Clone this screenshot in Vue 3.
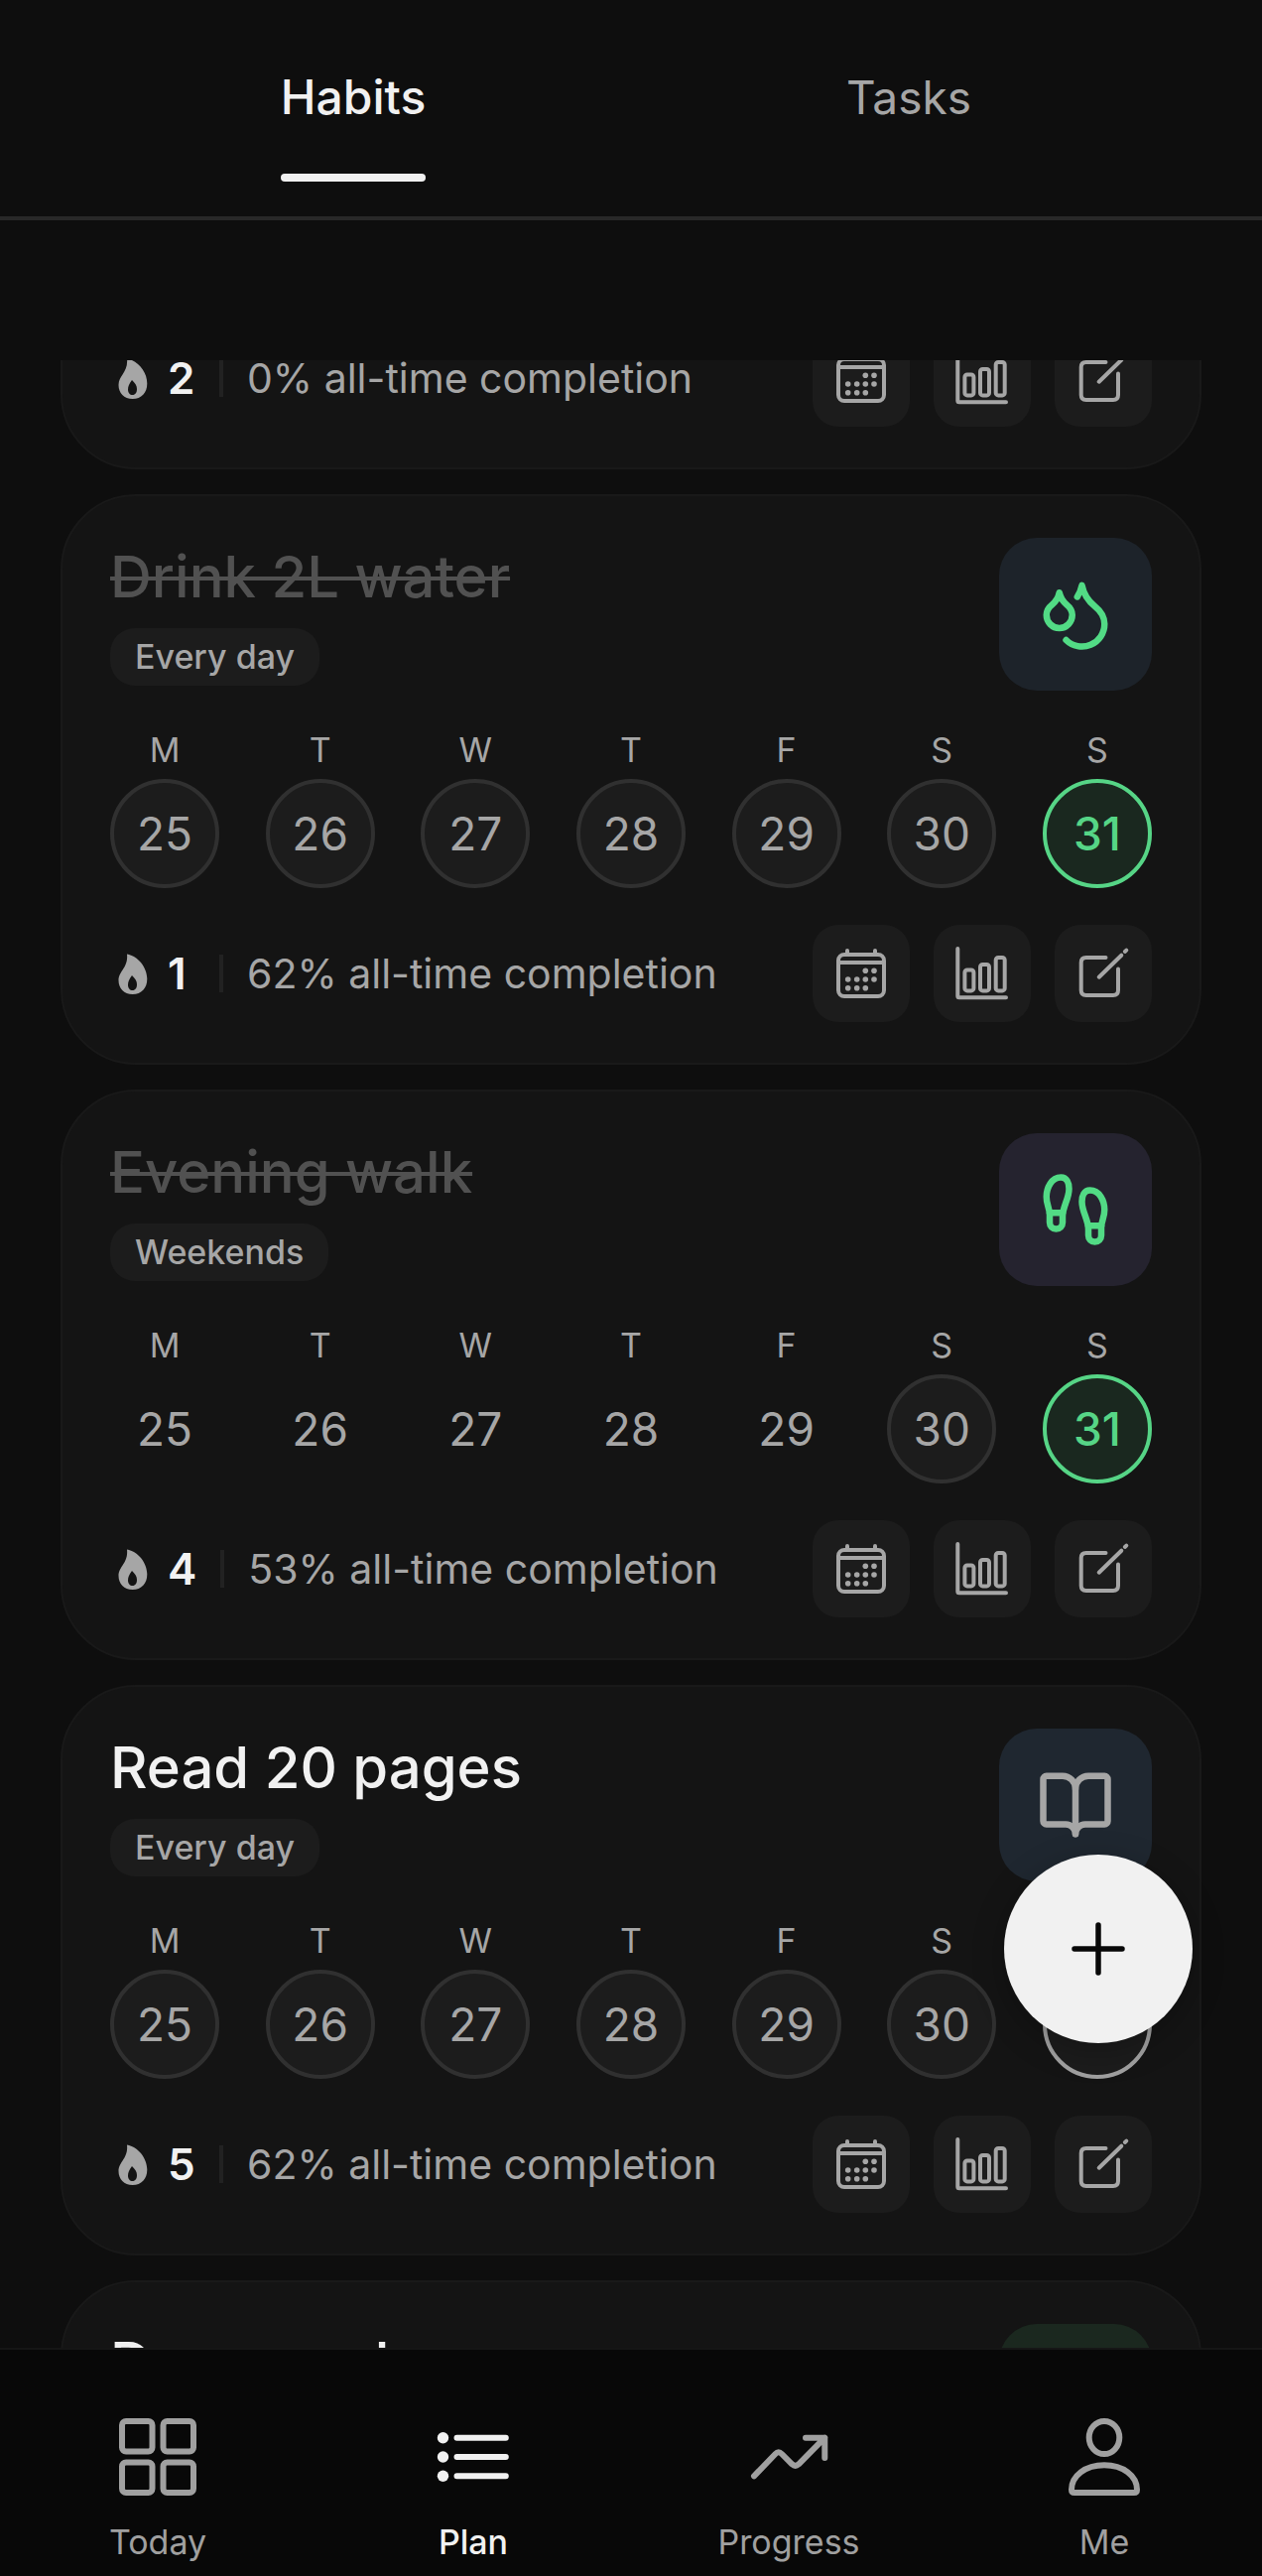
<script setup>
import { onMounted, ref } from 'vue'

const letters = ['M', 'T', 'W', 'T', 'F', 'S', 'S']
const days = letters.map((letter, i) => ({ letter, date: 25 + i, weekend: i > 4 }))

const habits = [
  { id: 0, streak: 2, rate: 0 },
  { id: 1, title: 'Drink 2L water', schedule: 'Every day', tone: 'blue', icon: 'drops', done: true, streak: 1, rate: 62 },
  { id: 2, title: 'Evening walk', schedule: 'Weekends', tone: 'violet', icon: 'steps', done: true, streak: 4, rate: 53 },
  { id: 3, title: 'Read 20 pages', schedule: 'Every day', tone: 'navy', icon: 'book', done: false, streak: 5, rate: 62 },
  { id: 4, title: 'Deep work', tone: 'green', done: false },
]

const icons = {
  drops: [
    'M7 16.3c2.2 0 4-1.83 4-4.05 0-1.16-.57-2.26-1.71-3.19S7.29 6.75 7 5.3c-.29 1.45-1.14 2.84-2.29 3.76S3 11.1 3 12.25c0 2.22 1.8 4.05 4 4.05z',
    'M12.56 6.6A10.97 10.97 0 0 0 14 3.02c.5 2.5 2 4.9 4 6.5s3 3.5 3 5.5a6.98 6.98 0 0 1-11.91 4.97',
  ],
  steps: [
    'M4 16v-2.38C4 11.5 2.97 10.5 3 8c.03-2.72 1.49-6 4.5-6C9.37 2 10 3.8 10 5.5c0 3.11-2 5.66-2 8.68V16a2 2 0 1 1-4 0Z',
    'M20 20v-2.38c0-2.12 1.03-3.12 1-5.62-.03-2.72-1.49-6-4.5-6C14.63 6 14 7.8 14 9.5c0 3.11 2 5.66 2 8.68V20a2 2 0 1 0 4 0Z',
    'M16 17h4',
    'M4 13h4',
  ],
  book: [
    'M12 7v14',
    'M3 18a1 1 0 0 1-1-1V4a1 1 0 0 1 1-1h5a4 4 0 0 1 4 4 4 4 0 0 1 4-4h5a1 1 0 0 1 1 1v13a1 1 0 0 1-1 1h-6a3 3 0 0 0-3 3 3 3 0 0 0-3-3z',
  ],
}

function dayClass(habit, day) {
  return {
    scheduled: habit.schedule !== 'Weekends' || day.weekend,
    today: day.date === 31,
    complete: day.date === 31 && habit.done,
  }
}

// Open the list at the second habit, with the end of the first still in view.
const scroller = ref(null)
onMounted(() => {
  scroller.value.scrollTop = 112
})
</script>

<template>
  <div class="app">
    <header class="tabs" role="tablist">
      <button class="tab active" role="tab" aria-selected="true"><span>Habits</span></button>
      <button class="tab" role="tab" aria-selected="false"><span>Tasks</span></button>
    </header>

    <main class="content">
      <div ref="scroller" class="list">
        <article v-for="habit in habits" :key="habit.id" class="card">
          <div v-if="habit.title" class="card-head">
            <div class="heading">
              <h2 :class="{ done: habit.done }">{{ habit.title }}</h2>
              <span v-if="habit.schedule" class="chip">{{ habit.schedule }}</span>
            </div>
            <div class="tile" :class="[habit.tone, { done: habit.done }]">
              <svg v-if="habit.icon" viewBox="0 0 24 24" aria-hidden="true">
                <path v-for="d in icons[habit.icon]" :key="d" :d="d" />
              </svg>
            </div>
          </div>

          <div v-if="habit.schedule" class="week">
            <div v-for="day in days" :key="day.date" class="day">
              <span class="letter">{{ day.letter }}</span>
              <span class="date" :class="dayClass(habit, day)">{{ day.date }}</span>
            </div>
          </div>

          <div v-if="habit.streak" class="card-foot">
            <svg class="flame" viewBox="0 0 30 41" aria-hidden="true">
              <path
                fill-rule="evenodd"
                d="M9 .4C20 2.500 29.300 13.500 29.300 25.500 29.300 35 23.500 41 14.700 41 6 41 .5 35 .5 27 .5 17.500 10.500 14 9 .4ZM14 22C11 26 10 28.500 10 31.500 10 35 12 37 14.500 37 17.500 37 19 34.500 19 31 19 27.500 17 25 14 22Z"
              />
            </svg>
            <strong class="streak">{{ habit.streak }}</strong>
            <span class="divider"></span>
            <span class="rate">{{ habit.rate }}% all-time completion</span>
            <div class="actions">
              <button aria-label="Calendar">
                <svg viewBox="0 0 56 56">
                  <rect x="5" y="9" width="46" height="42" rx="6" />
                  <path d="M5 17H51M14 5V9M42 5V9" />
                  <g class="dots">
                    <circle cx="32.300" cy="25.300" r="2.800" /><circle cx="41" cy="25.300" r="2.800" />
                    <circle cx="14.700" cy="34" r="2.800" /><circle cx="23.700" cy="34" r="2.800" />
                    <circle cx="32.300" cy="34" r="2.800" /><circle cx="41" cy="34" r="2.800" />
                    <circle cx="14.700" cy="42.700" r="2.800" /><circle cx="23.700" cy="42.700" r="2.800" />
                    <circle cx="32.300" cy="42.700" r="2.800" />
                  </g>
                </svg>
              </button>
              <button aria-label="Statistics">
                <svg viewBox="0 0 56 56">
                  <path d="M3.300 3V50.800Q3.300 52.300 4.800 52.300H52" />
                  <rect x="10.400" y="24.400" width="9" height="21" rx="2.500" />
                  <rect x="26" y="19" width="9" height="26.400" rx="2.500" />
                  <rect x="41.700" y="12" width="9" height="33.400" rx="2.500" />
                </svg>
              </button>
              <button aria-label="Edit">
                <svg viewBox="0 0 56 56">
                  <path d="M30.500 12H10.700Q5.700 12 5.700 17V45Q5.700 50 10.700 50H38Q43 50 43 45V23.500" />
                  <path d="M23.700 31.700 46.300 9.700M49.800 6 51.300 4.600" />
                </svg>
              </button>
            </div>
          </div>
        </article>
      </div>

      <button class="fab" aria-label="Add habit">
        <svg viewBox="0 0 56 56"><path d="M28 4V52M4 28H52" /></svg>
      </button>
    </main>

    <nav class="bottom-nav">
      <a href="#today">
        <svg viewBox="0 0 80 80" aria-hidden="true">
          <rect x="4" y="4" width="30.500" height="30.500" rx="4" /><rect x="45.500" y="4" width="30.500" height="30.500" rx="4" />
          <rect x="4" y="45.500" width="30.500" height="30.500" rx="4" /><rect x="45.500" y="45.500" width="30.500" height="30.500" rx="4" />
        </svg>
        <span>Today</span>
      </a>
      <a href="#plan" class="active" aria-current="page">
        <svg viewBox="0 0 80 80" aria-hidden="true">
          <path d="M23.500 20.700H72.800M23.500 40H72.800M23.500 59.300H72.800" />
          <g class="dots"><circle cx="9.500" cy="20.700" r="5.700" /><circle cx="9.500" cy="40" r="5.700" /><circle cx="9.500" cy="59.300" r="5.700" /></g>
        </svg>
        <span>Plan</span>
      </a>
      <a href="#progress">
        <svg viewBox="0 0 80 80" aria-hidden="true">
          <path d="M5 59.300 26.500 37Q29.700 33.700 33 37L43.300 47.300Q46.600 50.300 50 47.300L76.300 20.700M57 20.700H76.300V41" />
        </svg>
        <span>Progress</span>
      </a>
      <a href="#me">
        <svg viewBox="0 0 80 80" aria-hidden="true">
          <ellipse cx="40" cy="20.500" rx="15.300" ry="16.600" />
          <path d="M7 73C7 59 21 48.300 40 48.300S73 59 73 73Q73 76 70 76H10Q7 76 7 73Z" />
        </svg>
        <span>Me</span>
      </a>
    </nav>
  </div>
</template>

<style>
body {
  background: #0e0e0e;
}
</style>

<style scoped>
.app {
  display: flex;
  flex-direction: column;
  height: 100vh;
  background: #0e0e0e;
  color: #a6a6a6;
  font-family: Inter, "Liberation Sans", sans-serif;
}

button {
  border: 0;
  padding: 0;
  background: none;
  color: inherit;
  font: inherit;
  cursor: pointer;
}

svg {
  display: block;
  fill: none;
  stroke: currentColor;
  stroke-linecap: round;
  stroke-linejoin: round;
}

.dots {
  fill: currentColor;
  stroke: none;
}

.tabs {
  display: flex;
  padding: 58px 76px 35px;
  border-bottom: 4px solid #282828;
}

.tab {
  flex: 1;
  display: flex;
  justify-content: center;
  font-size: 46px;
  line-height: 80px;
}

.tab span {
  position: relative;
  padding-bottom: 45px;
}

.tab.active {
  color: #f1f1f1;
  font-size: 48px;
  font-weight: 500;
}

.tab.active span::after {
  content: "";
  position: absolute;
  left: 0;
  right: 0;
  bottom: 0;
  height: 8px;
  border-radius: 4px;
  background: #f1f1f1;
}

.content {
  flex: 1;
  min-height: 0;
  display: flex;
  flex-direction: column;
  padding-top: 141px;
  position: relative;
}

.list {
  flex: 1;
  min-height: 0;
  overflow-y: auto;
  scrollbar-width: none;
  display: flex;
  flex-direction: column;
  gap: 25px;
  padding: 0 61px;
}

.card {
  flex: none;
  padding: 42px 48px 41px;
  border: 2px solid #191919;
  border-radius: 76px;
  background: #141414;
}

.card-head {
  display: flex;
  justify-content: space-between;
  height: 154px;
}

.heading {
  display: flex;
  flex-direction: column;
  align-items: flex-start;
  gap: 13px;
}

h2 {
  margin: 0;
  color: #f1f1f1;
  font-size: 58px;
  font-weight: 500;
  line-height: 78px;
}

h2.done {
  color: #515151;
  text-decoration: line-through 4px;
}

.chip {
  padding: 0 25px;
  border-radius: 25px;
  background: #1c1c1c;
  font-size: 34px;
  font-weight: 500;
  line-height: 58px;
}

.tile {
  display: grid;
  place-items: center;
  width: 154px;
  height: 154px;
  border-radius: 38px;
}

.tile.done {
  color: #52db85;
}

.tile svg {
  width: 78px;
  height: 78px;
  stroke-width: 2;
}

.blue { background: #1d232a; }
.violet { background: #25232f; }
.navy { background: #1f2730; }
.green { background: #1b281f; }

.week {
  display: flex;
  justify-content: space-between;
  margin-top: 38px;
}

.day {
  display: flex;
  flex-direction: column;
  align-items: center;
  gap: 7px;
}

.letter {
  font-size: 34px;
  line-height: 44px;
}

.date {
  box-sizing: border-box;
  display: grid;
  place-items: center;
  width: 110px;
  height: 110px;
  border: 4px solid transparent;
  border-radius: 50%;
  font-size: 46px;
  line-height: 54px;
}

.date.scheduled {
  border-color: #303030;
  background: #1c1c1c;
}

.date.today {
  border-color: #a0a0a0;
  font-weight: 500;
}

.date.complete {
  border-color: #56d586;
  background: #1a281f;
  color: #56d586;
}

.card-foot {
  display: flex;
  align-items: center;
  height: 98px;
  margin-top: 37px;
  padding-left: 8px;
}

.flame {
  width: 30px;
  height: 41px;
  fill: currentColor;
  stroke: none;
}

.streak {
  min-width: 28px;
  margin-left: 20px;
  color: #f1f1f1;
  font-size: 44px;
  font-weight: 600;
  line-height: 54px;
}

.divider {
  width: 4px;
  height: 38px;
  margin: 0 24px;
  background: #222;
}

.rate {
  font-size: 41px;
  line-height: 50px;
}

.actions {
  display: flex;
  gap: 24px;
  margin-left: auto;
}

.actions button {
  display: grid;
  place-items: center;
  width: 98px;
  height: 98px;
  border-radius: 26px;
  background: #1c1c1c;
}

.actions svg {
  width: 56px;
  height: 56px;
  stroke-width: 4;
}

.fab {
  position: absolute;
  right: 70px;
  bottom: 307px;
  display: grid;
  place-items: center;
  width: 190px;
  height: 190px;
  border-radius: 50%;
  background: #f1f1f1;
  color: #080808;
  box-shadow: 0 8px 32px rgba(0, 0, 0, 0.25);
}

.fab svg {
  width: 56px;
  height: 56px;
  stroke-width: 5.5;
}

.bottom-nav {
  display: flex;
  padding: 68px 0 12px;
  border-top: 2px solid #161616;
  background: #080808;
}

.bottom-nav a {
  flex: 1;
  display: flex;
  flex-direction: column;
  align-items: center;
  gap: 24px;
  color: #a0a0a0;
  font-size: 34px;
  line-height: 44px;
  text-decoration: none;
}

.bottom-nav a.active {
  color: #f1f1f1;
  font-weight: 500;
}

.bottom-nav svg {
  width: 80px;
  height: 80px;
  stroke-width: 6;
}
</style>
